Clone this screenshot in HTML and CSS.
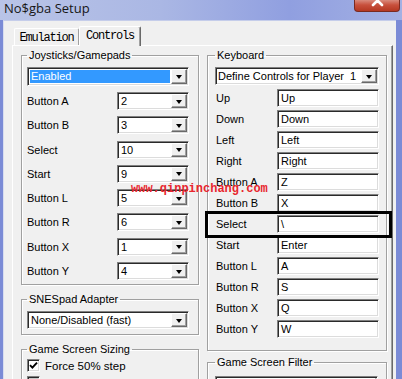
FILE: index.html
```html
<!DOCTYPE html>
<html>
<head>
<meta charset="utf-8">
<link rel="stylesheet" href="styles.css">
</head>
<body>
<div class="titlebar">
  <span class="title">No$gba Setup</span>
  <div class="close"><svg width="46" height="12" viewBox="0 0 46 12"><path d="M19 -4 L28 5 M28 -4 L19 5" stroke="#fff" stroke-width="2.6" stroke-linecap="round"/></svg></div>
</div>
<div class="frame">
  <div class="client">
    <div class="tabs">
      <div class="tab">Emulation</div>
      <div class="tab active">Controls</div>
    </div>
    <div class="panel">
      <div class="col left">
        <fieldset class="group joy">
          <legend>Joysticks/Gamepads</legend>
          <div class="combo tall"><span class="val hl">Enabled</span><span class="btn"></span></div>
          <div class="rows joyrows">
            <div class="row"><span>Button A</span><div class="combo small"><span class="val">2</span><span class="btn"></span></div></div>
            <div class="row"><span>Button B</span><div class="combo small"><span class="val">3</span><span class="btn"></span></div></div>
            <div class="row"><span>Select</span><div class="combo small"><span class="val">10</span><span class="btn"></span></div></div>
            <div class="row"><span>Start</span><div class="combo small"><span class="val">9</span><span class="btn"></span></div></div>
            <div class="row"><span>Button L</span><div class="combo small"><span class="val">5</span><span class="btn"></span></div></div>
            <div class="row"><span>Button R</span><div class="combo small"><span class="val">6</span><span class="btn"></span></div></div>
            <div class="row"><span>Button X</span><div class="combo small"><span class="val">1</span><span class="btn"></span></div></div>
            <div class="row"><span>Button Y</span><div class="combo small"><span class="val">4</span><span class="btn"></span></div></div>
          </div>
        </fieldset>
        <fieldset class="group snes">
          <legend>SNESpad Adapter</legend>
          <div class="combo"><span class="val">None/Disabled (fast)</span><span class="btn"></span></div>
        </fieldset>
        <fieldset class="group sizing">
          <legend>Game Screen Sizing</legend>
          <div class="check"><span class="box"><svg width="9" height="9" viewBox="0 0 9 9"><path d="M1 4.2 L3.4 6.6 L8 1.6" fill="none" stroke="#000" stroke-width="1.9"/></svg></span>Force 50% step</div>
          <div class="check"><span class="box off"></span>Force Integer Scale</div>
        </fieldset>
      </div>
      <div class="col right">
        <fieldset class="group kbd">
          <legend>Keyboard</legend>
          <div class="combo"><span class="val pre">Define Controls for Player  1</span><span class="btn"></span></div>
          <div class="rows kbdrows">
            <div class="row"><span class="lbl">Up</span><div class="field">Up</div></div>
            <div class="row"><span class="lbl">Down</span><div class="field">Down</div></div>
            <div class="row"><span class="lbl">Left</span><div class="field">Left</div></div>
            <div class="row"><span class="lbl">Right</span><div class="field">Right</div></div>
            <div class="row"><span class="lbl">Button A</span><div class="field">Z</div></div>
            <div class="row"><span class="lbl">Button B</span><div class="field">X</div></div>
            <div class="row"><span class="lbl">Select</span><div class="field">\</div></div>
            <div class="row"><span class="lbl">Start</span><div class="field">Enter</div></div>
            <div class="row"><span class="lbl">Button L</span><div class="field">A</div></div>
            <div class="row"><span class="lbl">Button R</span><div class="field">S</div></div>
            <div class="row"><span class="lbl">Button X</span><div class="field">Q</div></div>
            <div class="row"><span class="lbl">Button Y</span><div class="field">W</div></div>
          </div>
        </fieldset>
        <fieldset class="group filter">
          <legend>Game Screen Filter</legend>
          <div class="combo"><span class="val"></span><span class="btn"></span></div>
        </fieldset>
      </div>
    </div>
  </div>
</div>
<div class="watermark">www.qinpinchang.com</div>
<div class="mark"></div>
</body>
</html>
```
FILE: styles.css
```css
* { box-sizing: border-box; }
html, body { margin: 0; width: 402px; height: 379px; overflow: hidden; }
body {
  position: relative;
  background: #7b8bd6;
  font-family: "Liberation Sans", Arial, sans-serif;
  font-size: 11px;
  color: #000;
}

.titlebar {
  height: 20px;
  display: flex;
  align-items: flex-start;
  padding-left: 4px;
  background: linear-gradient(90deg, #b9c4e7 0%, #aab7e4 40%, #909fe0 72%, #a3b0e3 100%);
}
.title {
  font-family: "Open Sans", sans-serif;
  font-size: 13px;
  line-height: 17px;
  color: #161616;
}
.close {
  margin-left: auto;
  margin-right: 2px;
  width: 46px;
  height: 12px;
  border: 1px solid #7a2a20;
  border-top: none;
  border-radius: 0 0 4px 4px;
  background: linear-gradient(#d98a7c, #c8503c 45%, #b43822);
  overflow: hidden;
}
.close svg { display: block; margin: 0 -1px; }

.frame {
  display: flex;
  height: 359px;
  padding: 0 6px 0 3px;
}
.client {
  flex: 1;
  background: #f0f0f0;
  border-top: 1px solid #c5cdea;
  border-left: 1px solid #d8ddef;
  padding: 5px 3px 0 8px;
  display: flex;
  flex-direction: column;
  overflow: hidden;
}

.tabs {
  display: flex;
  align-items: flex-end;
  height: 20px;
  margin-bottom: -1px;
  padding-left: 2px;
}
.tab {
  font-family: "Liberation Mono", monospace;
  font-size: 12px;
  letter-spacing: -1.2px;
  height: 17px;
  width: 65px;
  margin-bottom: 1px;
  border-top: 1px solid #fff;
  border-left: 1px solid #fff;
  border-right: 1px solid #a0a0a0;
  border-radius: 2px 2px 0 0;
  background: #f0f0f0;
  display: flex;
  justify-content: center;
  padding-top: 2px;
  line-height: 14px;
}
.tab.active {
  position: relative;
  z-index: 1;
  width: 62px;
  height: 20px;
  margin-bottom: 0;
  padding-top: 2px;
  border-right: 1px solid #696969;
  box-shadow: inset -1px 0 0 #a0a0a0;
}

.panel {
  flex: 1;
  background: #f0f0f0;
  border-top: 1px solid #fff;
  border-left: 1px solid #fff;
  border-right: 1px solid #696969;
  box-shadow: inset -1px 0 0 #a0a0a0;
  padding: 3px 5px 0 8px;
  display: flex;
  gap: 8px;
}
.col { display: flex; flex-direction: column; }
.col.left { flex: 0 0 178px; }
.col.right { flex: 1; }

.group {
  margin: 0;
  min-width: 0;
  border: 1px solid #a0a0a0;
  box-shadow: 1px 1px 0 #fff, inset 1px 1px 0 #fff;
}
.group legend {
  padding: 0 2px;
  line-height: 13px;
  font-size: 11px;
}
.joy { padding: 5px 9px 4px 5px; }
.snes { margin-top: 8px; padding: 5px 9px 5px 5px; }
.sizing { margin-top: 8px; padding: 3px 9px 4px 5px; }
.kbd { padding: 5px 7px 12px 7px; }
.filter { margin-top: 5px; padding: 7px 8px 4px 7px; }

.combo {
  display: flex;
  height: 18px;
  background: #fff;
  border: 1px solid;
  border-color: #808080 #fff #fff #808080;
  padding: 1px;
  box-shadow: inset 1px 1px 0 #2a2a2a, inset -1px -1px 0 #dcdcdc;
}
.combo.tall { height: 19px; margin-bottom: 6px; }
.kbd .combo { margin-bottom: 4px; }
.combo.small { width: 72px; margin-left: auto; }
.val {
  flex: 1;
  padding-left: 2px;
  line-height: 14px;
  white-space: nowrap;
  overflow: hidden;
}
.val.pre { white-space: pre; padding-left: 1px; }
.val.hl {
  background: #3399ff;
  color: #fff;
  margin: 1px;
  line-height: 13px;
  padding-left: 1px;
}
.btn {
  width: 16px;
  flex: 0 0 16px;
  background: #f0f0f0;
  border: 1px solid;
  border-color: #fff #696969 #696969 #fff;
  box-shadow: inset -1px -1px 0 #a0a0a0;
  display: flex;
  align-items: center;
  justify-content: center;
}
.btn::after {
  content: "";
  border-left: 3.5px solid transparent;
  border-right: 3.5px solid transparent;
  border-top: 4px solid #000;
  margin-top: 1px;
}

.rows { display: flex; flex-direction: column; }
.joyrows { gap: 6.3px; }
.kbdrows { gap: 3px; }
.row {
  display: flex;
  align-items: center;
  height: 18px;
}
.lbl { padding-left: 1px; }
.field {
  width: 102px;
  height: 18px;
  margin-left: auto;
  background: #fff;
  border: 1px solid;
  border-color: #808080 #fff #fff #808080;
  box-shadow: inset 1px 1px 0 #2a2a2a, inset -1px -1px 0 #dcdcdc;
  padding: 1px 0 0 3px;
  line-height: 15px;
}

.check {
  display: flex;
  align-items: center;
  height: 13px;
  gap: 5px;
  margin-bottom: 4px;
  font-size: 11.5px;
}
.box {
  width: 13px;
  height: 13px;
  background: #fff;
  border: 1px solid;
  border-color: #808080 #fff #fff #808080;
  box-shadow: inset 1px 1px 0 #2a2a2a, inset -1px -1px 0 #dcdcdc;
  display: flex;
  align-items: center;
  justify-content: center;
}
.box.off { background: #c8c8c8; }

.watermark {
  position: absolute;
  left: 131px;
  top: 182px;
  font-family: "Liberation Mono", monospace;
  font-weight: bold;
  font-size: 12px;
  line-height: 14px;
  color: #e8262e;
}
.mark {
  position: absolute;
  left: 205px;
  top: 211px;
  width: 187px;
  height: 27px;
  border: 3px solid #000;
}
```
